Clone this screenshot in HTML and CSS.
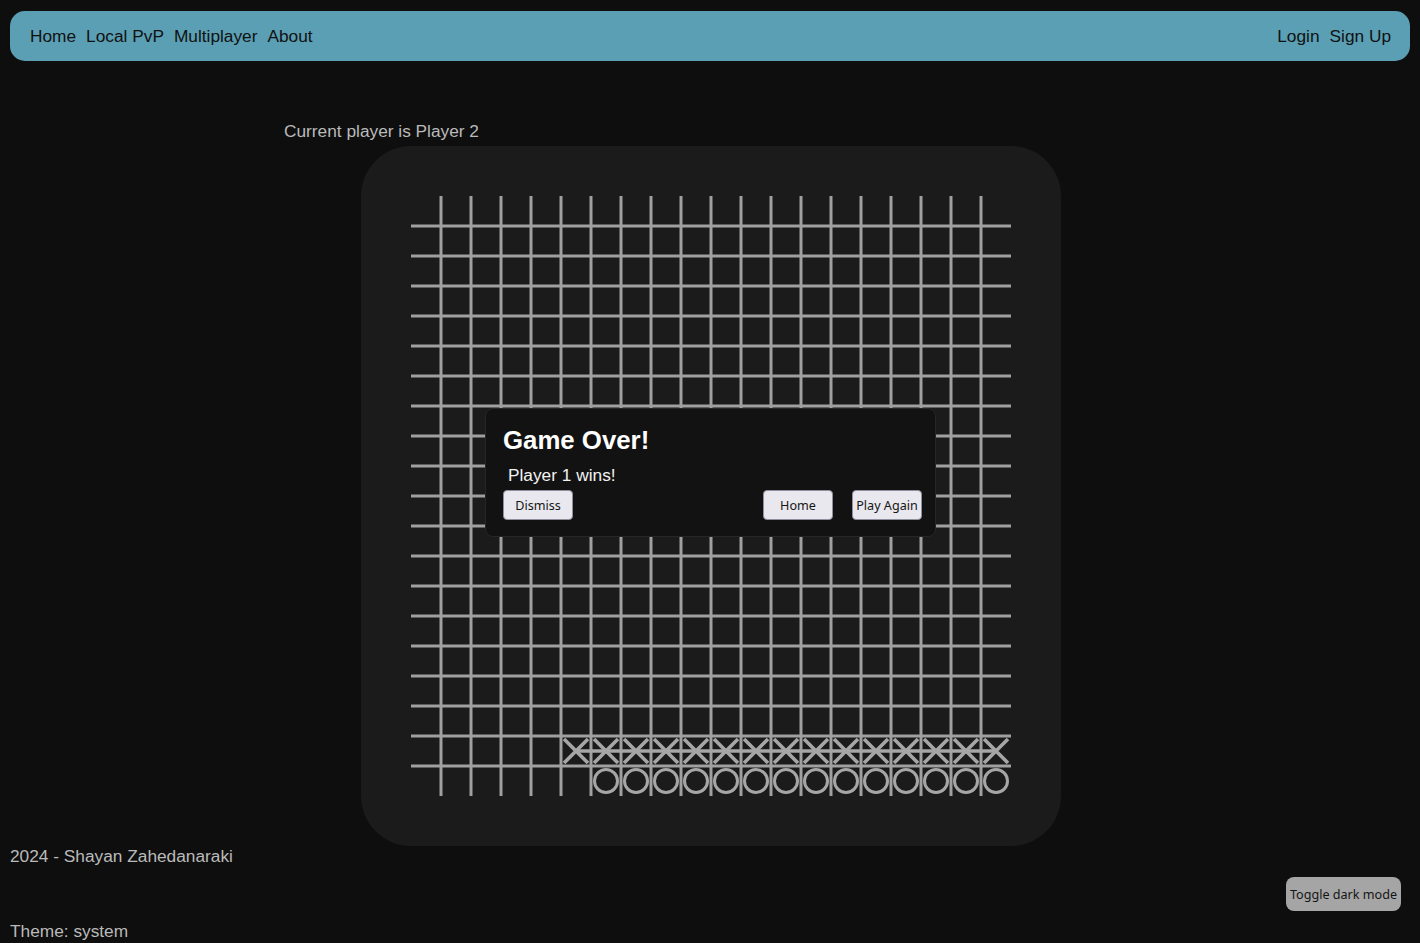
FILE: index.html
```html
<!DOCTYPE html>
<html lang="en">
<head>
<meta charset="utf-8">
<title>Tic Tac Toe</title>
<link rel="stylesheet" href="styles.css">
</head>
<body>
<nav class="nav">
  <div class="nav-group">
    <a class="nav-link" href="#">Home</a>
    <a class="nav-link" href="#">Local PvP</a>
    <a class="nav-link" href="#">Multiplayer</a>
    <a class="nav-link" href="#">About</a>
  </div>
  <div class="nav-group">
    <a class="nav-link" href="#">Login</a>
    <a class="nav-link" href="#">Sign Up</a>
  </div>
</nav>
<main class="main">
  <p class="status">Current player is Player 2</p>
  <div class="board">
    <svg class="grid" width="600" height="600" viewBox="0 0 600 600">
      <defs>
        <path id="xmark" d="M-12 -12L12 12M12 -12L-12 12"/>
      </defs>
      <path class="lines" d="M30 0V600M60 0V600M90 0V600M120 0V600M150 0V600M180 0V600M210 0V600M240 0V600M270 0V600M300 0V600M330 0V600M360 0V600M390 0V600M420 0V600M450 0V600M480 0V600M510 0V600M540 0V600M570 0V600M0 30H600M0 60H600M0 90H600M0 120H600M0 150H600M0 180H600M0 210H600M0 240H600M0 270H600M0 300H600M0 330H600M0 360H600M0 390H600M0 420H600M0 450H600M0 480H600M0 510H600M0 540H600M0 570H600"/>
      <g class="xs">
        <use href="#xmark" x="165" y="555"/>
        <use href="#xmark" x="195" y="555"/>
        <use href="#xmark" x="225" y="555"/>
        <use href="#xmark" x="255" y="555"/>
        <use href="#xmark" x="285" y="555"/>
        <use href="#xmark" x="315" y="555"/>
        <use href="#xmark" x="345" y="555"/>
        <use href="#xmark" x="375" y="555"/>
        <use href="#xmark" x="405" y="555"/>
        <use href="#xmark" x="435" y="555"/>
        <use href="#xmark" x="465" y="555"/>
        <use href="#xmark" x="495" y="555"/>
        <use href="#xmark" x="525" y="555"/>
        <use href="#xmark" x="555" y="555"/>
        <use href="#xmark" x="585" y="555"/>
        <path d="M165 555H585"/>
      </g>
      <g class="os">
        <circle cx="195" cy="585" r="11.5"/>
        <circle cx="225" cy="585" r="11.5"/>
        <circle cx="255" cy="585" r="11.5"/>
        <circle cx="285" cy="585" r="11.5"/>
        <circle cx="315" cy="585" r="11.5"/>
        <circle cx="345" cy="585" r="11.5"/>
        <circle cx="375" cy="585" r="11.5"/>
        <circle cx="405" cy="585" r="11.5"/>
        <circle cx="435" cy="585" r="11.5"/>
        <circle cx="465" cy="585" r="11.5"/>
        <circle cx="495" cy="585" r="11.5"/>
        <circle cx="525" cy="585" r="11.5"/>
        <circle cx="555" cy="585" r="11.5"/>
        <circle cx="585" cy="585" r="11.5"/>
      </g>
    </svg>
    <div class="dialog">
      <h2 class="dialog-title">Game Over!</h2>
      <p class="dialog-text">Player 1 wins!</p>
      <div class="dialog-actions">
        <button class="btn">Dismiss</button>
        <span class="spacer"></span>
        <button class="btn">Home</button>
        <button class="btn">Play Again</button>
      </div>
    </div>
  </div>
</main>
<footer class="footer">
  <p class="footer-text">2024 - Shayan Zahedanaraki</p>
  <div class="toggle-row">
    <button class="toggle">Toggle dark mode</button>
  </div>
  <p class="footer-text">Theme: system</p>
</footer>
</body>
</html>
```

FILE: styles.css
```css
* {
  box-sizing: border-box;
}

html {
  background: #0e0e0e;
}

body {
  margin: 0;
  padding: 11px 10px 20px;
  background: #0e0e0e;
  font-family: "Liberation Sans", Arial, sans-serif;
  font-size: 17.3px;
  color: #b9b9b9;
}

.nav {
  height: 50px;
  background: #5a9fb4;
  border-radius: 15px;
  padding: 0 19px 0 20px;
  display: flex;
  align-items: center;
  justify-content: space-between;
}

.nav-group {
  display: flex;
  gap: 10px;
}

.nav-link {
  color: #111;
  text-decoration: none;
  font-size: 17.3px;
  line-height: 20px;
}

.main {
  width: 852px;
  margin: 60px auto 0;
}

.status {
  margin: 0;
  line-height: 20px;
  font-size: 17.3px;
  color: #bababa;
}

.board {
  position: relative;
  width: 700px;
  height: 700px;
  margin: 5px 0 0 77px;
  padding: 50px;
  background: #1b1b1b;
  border-radius: 50px;
}

.grid {
  display: block;
}

.lines {
  fill: none;
  stroke: #a0a0a0;
  stroke-width: 3;
}

.xs {
  fill: none;
  stroke: #a6a6a6;
  stroke-width: 3.6;
}

.os {
  fill: none;
  stroke: #a6a6a6;
  stroke-width: 3;
}

.dialog {
  position: absolute;
  left: 124px;
  top: 262px;
  width: 451px;
  height: 129px;
  background: #121212;
  border: 1px solid #262626;
  border-radius: 8px;
  padding: 16px 13px 0 17px;
}

.dialog-title {
  margin: 0;
  font-size: 25.8px;
  line-height: 30px;
  font-weight: bold;
  color: #ffffff;
}

.dialog-text {
  margin: 10px 0 0 5px;
  font-size: 17.3px;
  line-height: 20px;
  color: #f2f2f2;
}

.dialog-actions {
  display: flex;
  gap: 19px;
  margin-top: 5px;
}

.spacer {
  flex: 1;
}

.btn {
  width: 70px;
  height: 30px;
  padding: 0;
  background: #e9e8ee;
  border: 1px solid #8f8f9d;
  border-radius: 4px;
  color: #151515;
  font-family: "Noto Sans", "DejaVu Sans", sans-serif;
  font-size: 12.6px;
  white-space: nowrap;
  text-align: center;
  overflow: visible;
}

.footer {
  display: flex;
  flex-direction: column;
}

.footer-text {
  margin: 0;
  line-height: 20px;
  font-size: 17.3px;
  color: #bababa;
}

.toggle-row {
  display: flex;
  justify-content: flex-end;
  margin-top: 11px;
  margin-bottom: 10px;
  padding-right: 9px;
}

.toggle {
  width: 115px;
  height: 34px;
  padding: 0;
  background: #a5a5a5;
  border: none;
  border-radius: 8px;
  color: #151515;
  font-family: "Noto Sans", "DejaVu Sans", sans-serif;
  font-size: 12.6px;
  white-space: nowrap;
}
```
